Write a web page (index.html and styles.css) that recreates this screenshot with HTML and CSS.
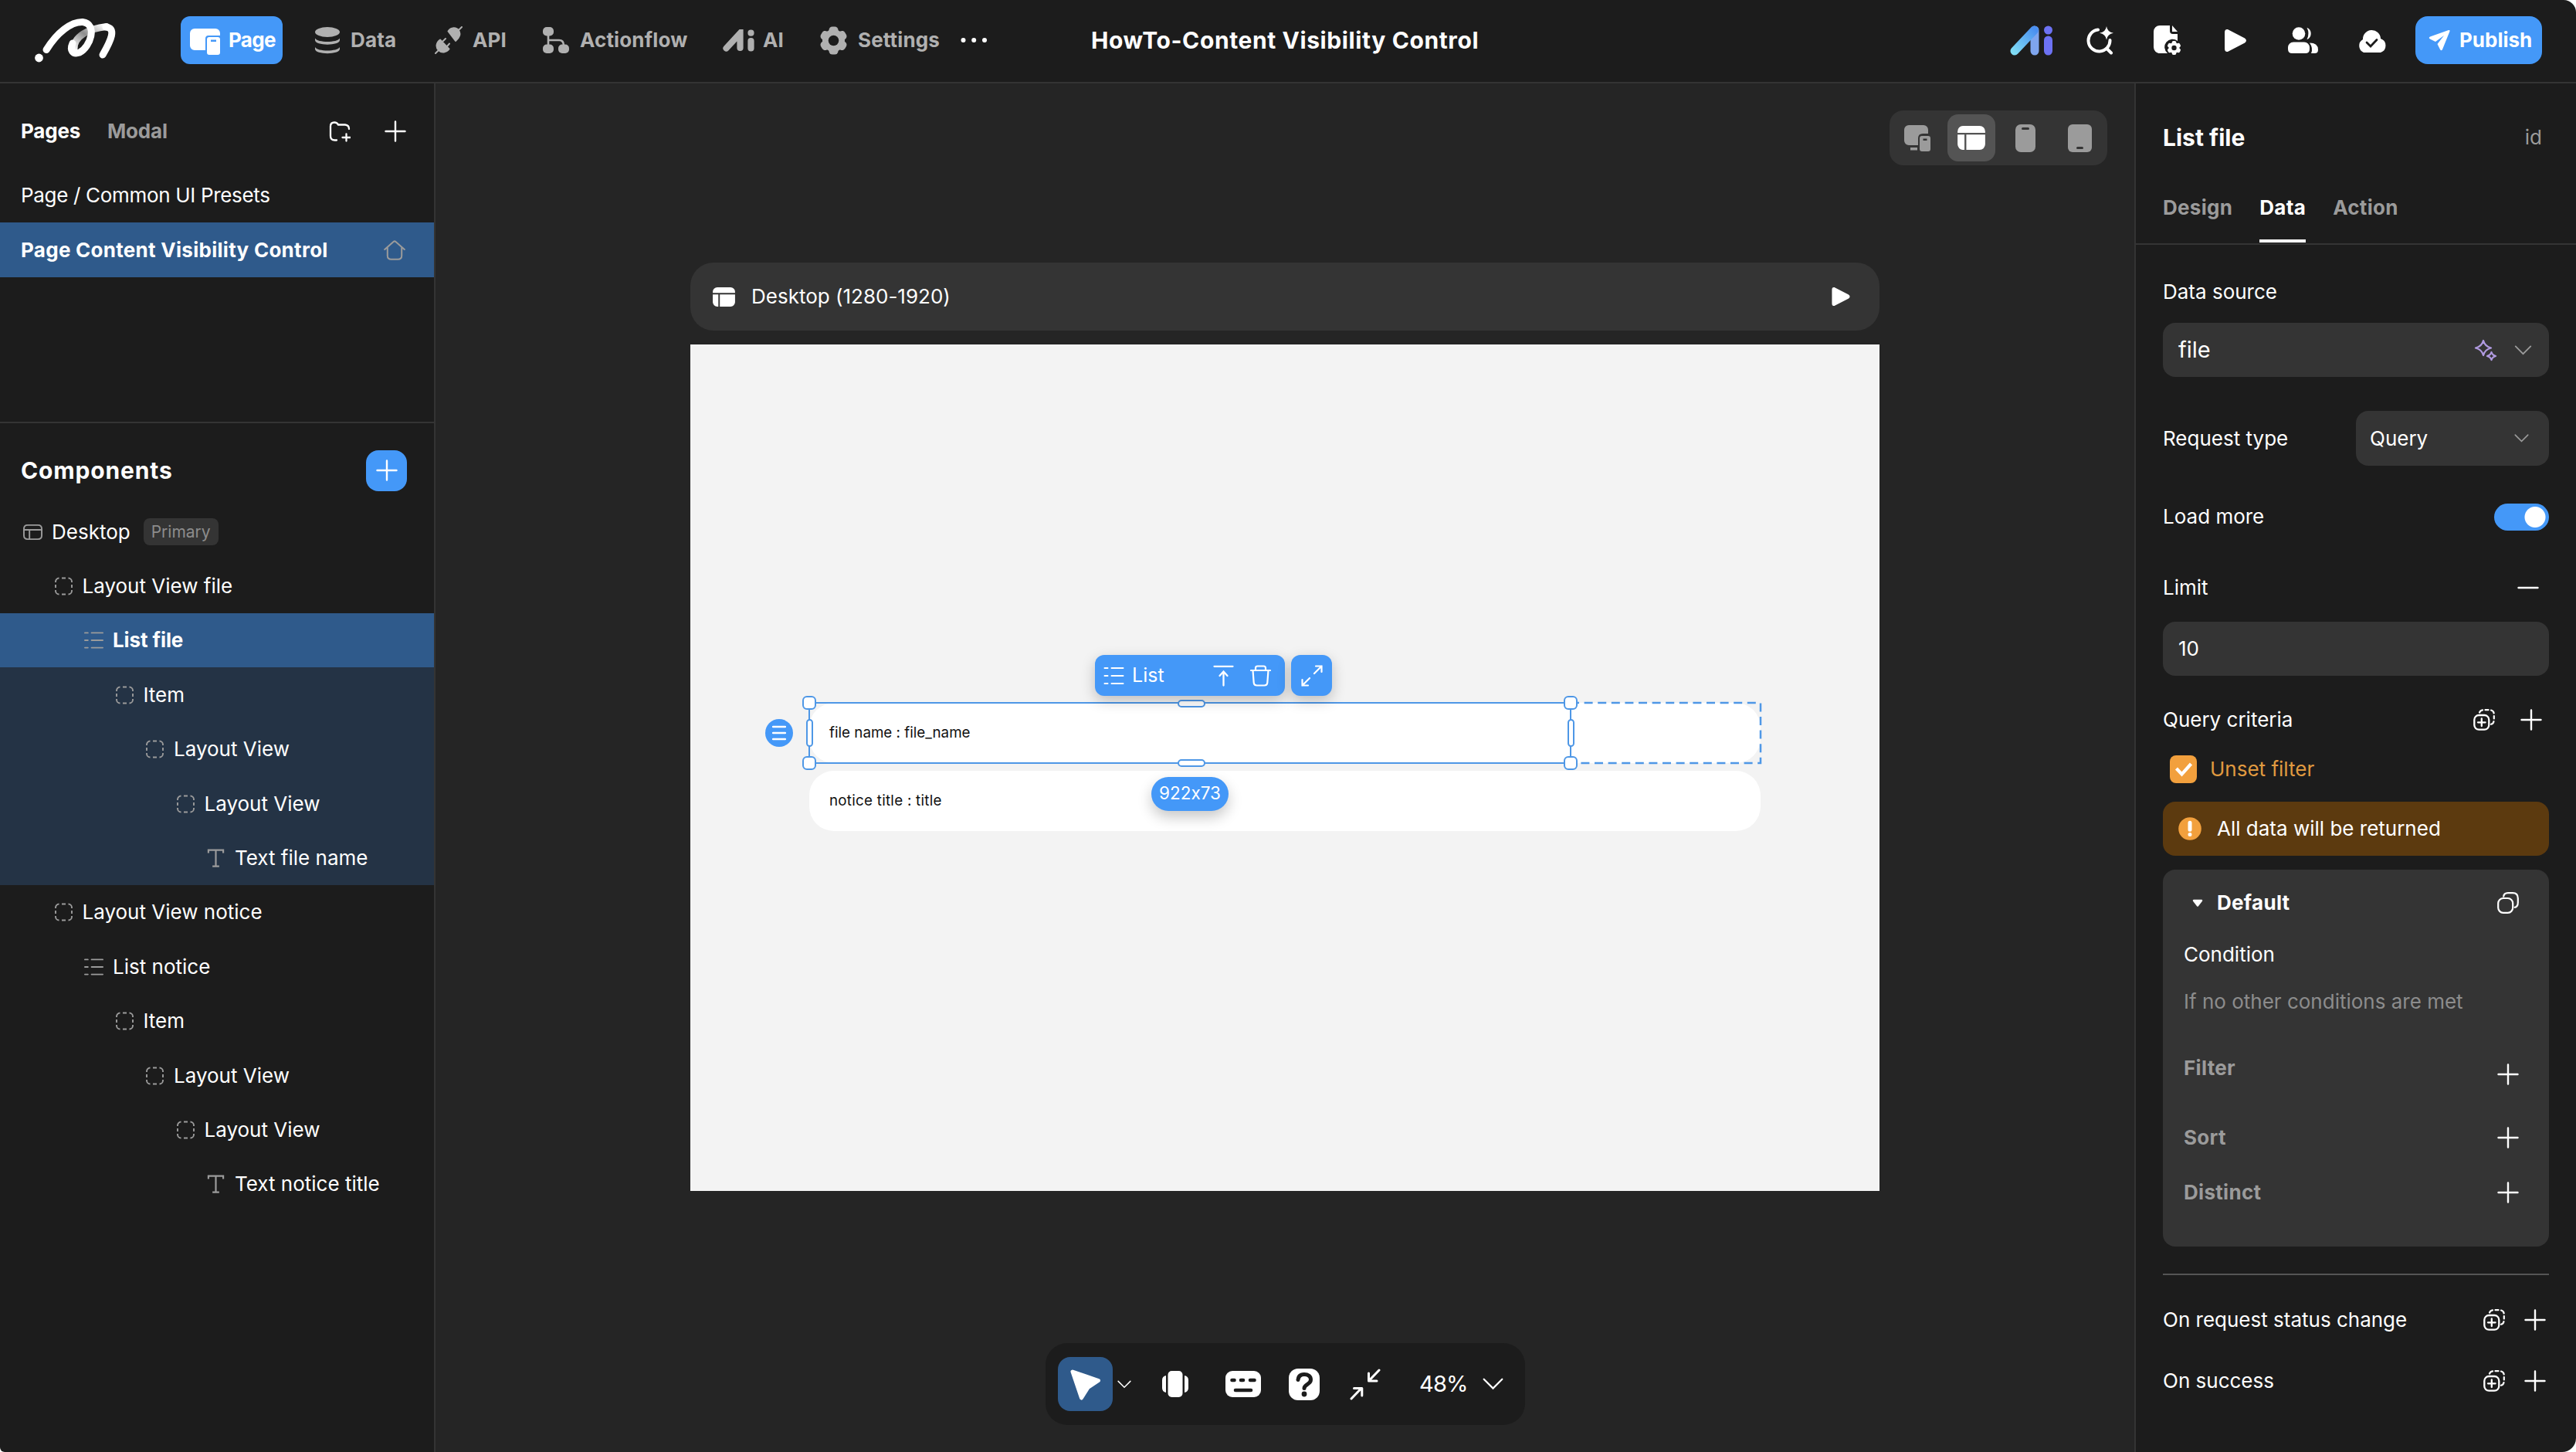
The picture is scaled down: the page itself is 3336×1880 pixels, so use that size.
FILE: index.html
```html
<!DOCTYPE html>
<html>
    <head>
        <title>HowTo-Content Visibility Control</title>
        <meta charset="utf-8">
        <meta name="viewport" content="width=device-width, initial-scale=1">
        <link rel="stylesheet" href="styles.css">
    </head>

    <body>
        <!-- shared icons -->
        <svg class="sprite">
            <symbol id="plus" viewBox="0 0 28 28"><path d="M14 1.5v25M1.5 14h25" fill="none" stroke="currentColor" stroke-width="2.4" stroke-linecap="round"/></symbol>
            <symbol id="view" viewBox="0 0 24 24"><path d="M1.5 7V6a4.500 4.500 0 0 1 4.500-4.500M18 1.500A4.500 4.500 0 0 1 22.500 6v1M22.500 17v1a4.500 4.500 0 0 1-4.500 4.500M6 22.500A4.500 4.500 0 0 1 1.500 18v-1M9.500 1.500h5M9.500 22.500h5M1.500 10v4M22.500 10v4" fill="none" stroke="currentColor" stroke-width="1.900"/></symbol>
            <symbol id="list" viewBox="0 0 26 24"><path d="M1 2h4M10 2h15M1 12h4M10 12h15M1 22h4M10 22h15" fill="none" stroke="currentColor" stroke-width="2" stroke-linecap="round"/></symbol>
            <symbol id="type" viewBox="0 0 20 22"><path d="M1.200 5V1.500h17.600V5M10 1.500v19M6 20.800h8" fill="none" stroke="currentColor" stroke-width="2"/></symbol>
            <symbol id="chevron" viewBox="0 0 24 14"><path d="M1.500 1.500 12 12 22.500 1.500" fill="none" stroke="currentColor" stroke-width="2" stroke-linecap="round"/></symbol>
            <symbol id="copyplus" viewBox="0 0 28 28">
                <rect x="1.300" y="8" width="19" height="18.700" rx="6" fill="none" stroke="currentColor" stroke-width="2.300"/>
                <path d="M10.800 12.500v9.600M6 17.300h9.600" stroke="currentColor" stroke-width="2.300" stroke-linecap="round"/>
                <path d="M8 4.500A5 5 0 0 1 12 1.300M15.500 1.200h4M23 1.500a5 5 0 0 1 3.700 4M26.800 9v3.500M26.500 16a5 5 0 0 1-3.500 3.800" fill="none" stroke="currentColor" stroke-width="2.200" stroke-linecap="round"/>
            </symbol>
            <symbol id="layout" viewBox="0 0 30 26"><path d="M0 7.500V6a6 6 0 0 1 6-6h18a6 6 0 0 1 6 6v1.500zM0 9.500h7.500V26H6a6 6 0 0 1-6-6zM9.500 9.500H30V20a6 6 0 0 1-6 6H9.500z" fill="currentColor"/></symbol>
            <symbol id="play" viewBox="0 0 28 30"><path d="M4 2.500 25 13.500q2 1.500 0 3L4 27.500q-2 .5-2-2v-21q0-2.500 2-2z" fill="currentColor" stroke="currentColor" stroke-width="3" stroke-linejoin="round"/></symbol>
        </svg>

        <header class="topbar">
            <div class="topbar-left">
                <svg class="logo" viewBox="44 22 108 60">
                    <defs><linearGradient id="ribbon" x1="0" y1="1" x2="1" y2="0"><stop offset="0" stop-color="#fff"/><stop offset=".5" stop-color="#8d8d8d"/><stop offset="1" stop-color="#fff"/></linearGradient></defs>
                    <g fill="none" stroke-width="9" stroke-linecap="round">
                        <path d="M96 64C95 47 115 37 138 34.500" stroke="url(#ribbon)"/>
                        <path d="M60 64.500C74 42 92 28 107 28.500C127 31 117 61 103 68C94 71 90 65 94 56" stroke="#fff"/>
                        <path d="M137 35C151 36 144 52 133 71" stroke="#fff"/>
                    </g>
                    <circle cx="50.500" cy="75" r="5.400" fill="#fff"/>
                </svg>
                <nav class="nav">
                    <a class="nav-item nav-active">
                        <svg width="39" height="34" viewBox="0 0 39 34"><path d="M6 0h27a6 6 0 0 1 6 6v3H24a4 4 0 0 0-4 4v15H6a6 6 0 0 1-6-6V6a6 6 0 0 1 6-6z" fill="#fff"/><path d="M25 11h11a3 3 0 0 1 3 3v17a3 3 0 0 1-3 3H25a3 3 0 0 1-3-3V14a3 3 0 0 1 3-3zm2 3.500v2.500h7v-2.500z" fill="#fff"/></svg>
                        <span>Page</span>
                    </a>
                    <a class="nav-item">
                        <svg width="34" height="36" viewBox="0 0 34 36" fill="currentColor"><ellipse cx="17" cy="7.500" rx="16" ry="6.500"/><path d="M1 15.500c3 6 29 6 32 0v2.500c0 7.500-32 7.500-32 0zM1 27c3 6 29 6 32 0v2.500c0 7.500-32 7.500-32 0z"/></svg>
                        <span>Data</span>
                    </a>
                    <a class="nav-item">
                        <svg width="36" height="36" viewBox="0 0 36 36" fill="currentColor" stroke="currentColor" stroke-linecap="round"><path d="M17.500 6.500C21 1 28 1 31 5.500c3 4 1 9.500-4 13.500zM18.500 29.500C15 34 9 35 5 31c-4-4-3-10 2-13.500zM31 5l4-4M5 31l-4 4M10 20l4-4M16 26l3-3.500" stroke-width="2" stroke-linejoin="round"/></svg>
                        <span>API</span>
                    </a>
                    <a class="nav-item">
                        <svg width="35" height="36" viewBox="0 0 35 36" fill="currentColor"><rect x="0" y="1" width="14" height="11.500" rx="5"/><rect x="0" y="23.500" width="14" height="11.500" rx="5"/><rect x="20" y="23.500" width="14" height="11.500" rx="5"/><path d="M7 10v15M7 18h14q6 0 6 7" fill="none" stroke="currentColor" stroke-width="2.600"/></svg>
                        <span>Actionflow</span>
                    </a>
                    <a class="nav-item nav-ai">
                        <svg width="41" height="29" viewBox="0 0 41 29" fill="none" stroke="currentColor" stroke-width="8.200" stroke-linecap="round"><path d="M4.500 24.500 22.500 5v19M36.500 15v9.500M36.500 4.600v.1"/></svg>
                        <span>AI</span>
                    </a>
                    <a class="nav-item">
                        <svg width="37" height="37" viewBox="0 0 37 37"><g fill="currentColor"><circle cx="18.500" cy="18.500" r="14.500"/><rect x="12.500" y=".5" width="12" height="36" rx="4.500"/><rect x="12.500" y=".5" width="12" height="36" rx="4.500" transform="rotate(60 18.500 18.500)"/><rect x="12.500" y=".5" width="12" height="36" rx="4.500" transform="rotate(120 18.500 18.500)"/></g><circle cx="18.500" cy="18.500" r="6.800" fill="#1c1c1c"/></svg>
                        <span>Settings</span>
                    </a>
                    <a class="nav-item"><svg width="35" height="8" viewBox="0 0 35 8" fill="#fff"><circle cx="3.500" cy="4" r="3"/><circle cx="17.200" cy="4" r="3"/><circle cx="31" cy="4" r="3"/></svg></a>
                </nav>
            </div>
            <h1 class="title">HowTo-Content Visibility Control</h1>
            <div class="topbar-right">
                <div class="tools">
                    <span><svg width="56" height="39" viewBox="0 0 56 39" fill="none" stroke-width="11" stroke-linecap="round"><defs><linearGradient id="aiblue" gradientUnits="userSpaceOnUse" x1="4" y1="34" x2="32" y2="5"><stop offset="0" stop-color="#7fdcf5"/><stop offset="1" stop-color="#4a8ff0"/></linearGradient></defs><path d="M32 6v27" stroke="#7fa5ee"/><path d="M6 33 31.500 6" stroke="url(#aiblue)"/><path d="M49.500 19v14M49.500 5.900v.1" stroke="#6d72f3"/></svg></span>
                    <span><svg width="36" height="37" viewBox="0 0 36 37"><path d="M16 4.500A14 14 0 1 0 31.500 18M27 28.500l6 6" fill="none" stroke="#fff" stroke-width="4" stroke-linecap="round"/><path d="M27 0q1 7.500 9 8.800-8 1.500-9 8.800-1-7.300-9-8.800 8-1.300 9-8.800z" fill="#fff"/></svg></span>
                    <span><svg width="36" height="39" viewBox="0 0 36 39"><path d="M8 0h13v7q0 4 4 4h6v9a10 10 0 0 0-13 16H8a8 8 0 0 1-8-8V8a8 8 0 0 1 8-8zM24 0l7 8h-7z" fill="#fff"/><g fill="#fff"><circle cx="26.500" cy="29" r="7"/><rect x="23.700" y="20" width="5.600" height="18" rx="2"/><rect x="23.700" y="20" width="5.600" height="18" rx="2" transform="rotate(60 26.500 29)"/><rect x="23.700" y="20" width="5.600" height="18" rx="2" transform="rotate(120 26.500 29)"/></g><circle cx="26.500" cy="29" r="3.200" fill="#1c1c1c"/></svg></span>
                    <span><svg width="30" height="31"><use href="#play"/></svg></span>
                    <span><svg width="40" height="35" viewBox="0 0 40 35" fill="#fff"><circle cx="14" cy="8.500" r="8.300"/><path d="M24.500.8a8.300 8.300 0 0 1 0 15.400q4-7.700 0-15.400zM7 19.500h14a7 7 0 0 1 7 7v2q0 5.500-5.500 5.500h-17Q0 34 0 28.500v-2a7 7 0 0 1 7-7zM28 20.500q11 0 11 9 0 4.500-4.500 4.500H30q3-6.500-2-13.500z"/></svg></span>
                    <span><svg width="41" height="31" viewBox="0 0 41 31"><path d="M9 14a11.500 11.500 0 0 1 23-1 9.500 9.500 0 0 1 0 18H10A9.500 9.500 0 0 1 9 14z" fill="#fff"/><path d="m14 18 5 5 8-8.500" fill="none" stroke="#1c1c1c" stroke-width="2.800" stroke-linecap="round"/></svg></span>
                </div>
                <button class="publish">
                    <svg width="28" height="28" viewBox="0 0 28 28"><path d="M26 1 2 9.500q-2.500 1.500 0 3L9 16 20 8l-8.500 11 3.500 7q1.500 2.500 3 0L27.500 2.500Q28 .5 26 1z" fill="#fff"/></svg>
                    <span>Publish</span>
                </button>
            </div>
        </header>

        <main class="workspace">
            <aside class="left">
                <div class="pages-head">
                    <span class="white">Pages</span>
                    <span>Modal</span>
                    <svg class="folder" width="28" height="27" viewBox="0 0 28 27"><path d="M10 24.500H7.500Q2 24.500 2 19V6.500Q2 1.500 7 1.500q3.500 0 5 3h9Q26 5 26 10" fill="none" stroke="#fff" stroke-width="2.300" stroke-linecap="round"/><path d="M22.500 16.500v9M17.500 21h10" stroke="#fff" stroke-width="2.300" stroke-linecap="round"/></svg>
                    <svg class="white" width="28" height="28"><use href="#plus"/></svg>
                </div>
                <div class="page-row">Page / Common UI Presets</div>
                <div class="page-row page-selected">
                    <span>Page Content Visibility Control</span>
                    <svg width="28" height="26" viewBox="0 0 28 26"><path d="M1.200 12 12.500 2q1.500-1.200 3 0L26.800 12M4.800 9.500V20q0 4.800 4.800 4.800h8.800q4.800 0 4.800-4.800V9.500" fill="none" stroke="#9b9b9b" stroke-width="2" stroke-linecap="round"/></svg>
                </div>

                <div class="components-head">
                    <h2>Components</h2>
                    <button class="add"><svg width="28" height="28"><use href="#plus"/></svg></button>
                </div>
                <ul class="tree">
                    <li class="l0"><svg viewBox="0 0 26 24"><path d="M6 2.500h14q5 0 5 5v9q0 5-5 5H6q-5 0-5-5v-9q0-5 5-5zM1 8.800h24M8.500 9v12.500" fill="none" stroke="currentColor" stroke-width="2"/></svg>Desktop<em class="badge">Primary</em></li>
                    <li class="l1"><svg><use href="#view"/></svg>Layout View file</li>
                    <li class="l2 selected"><svg><use href="#list"/></svg>List file</li>
                    <li class="l3 child"><svg><use href="#view"/></svg>Item</li>
                    <li class="l4 child"><svg><use href="#view"/></svg>Layout View</li>
                    <li class="l5 child"><svg><use href="#view"/></svg>Layout View</li>
                    <li class="l6 child"><svg><use href="#type"/></svg>Text file name</li>
                    <li class="l1"><svg><use href="#view"/></svg>Layout View notice</li>
                    <li class="l2"><svg><use href="#list"/></svg>List notice</li>
                    <li class="l3"><svg><use href="#view"/></svg>Item</li>
                    <li class="l4"><svg><use href="#view"/></svg>Layout View</li>
                    <li class="l5"><svg><use href="#view"/></svg>Layout View</li>
                    <li class="l6"><svg><use href="#type"/></svg>Text notice title</li>
                </ul>
            </aside>

            <section class="canvas">
                <div class="devices">
                    <span><svg width="34" height="36" viewBox="0 0 34 36" fill="currentColor"><path d="M6 1h19a6 6 0 0 1 6 6v5h-7q-6 0-6 6v9H6a6 6 0 0 1-6-6V7a6 6 0 0 1 6-6zM8 30h9v3.500H8z"/><path d="M23 15h8a3 3 0 0 1 3 3v14a3 3 0 0 1-3 3h-8a3 3 0 0 1-3-3V18a3 3 0 0 1 3-3zm1.500 3.500v2.500h5v-2.500z"/></svg></span>
                    <span class="device-on"><svg width="36" height="31"><use href="#layout"/></svg></span>
                    <span><svg width="26" height="36" viewBox="0 0 26 36"><rect width="26" height="36" rx="7" fill="currentColor"/><rect x="8" y="4" width="10" height="3" rx="1.500" fill="#343434"/></svg></span>
                    <span><svg width="31" height="36" viewBox="0 0 31 36"><rect width="31" height="36" rx="6" fill="currentColor"/><rect x="11" y="29" width="9" height="3" rx="1.500" fill="#343434"/></svg></span>
                </div>

                <div class="frame">
                    <div class="frame-head">
                        <svg width="29" height="25"><use href="#layout"/></svg>
                        <span>Desktop (1280-1920)</span>
                        <svg class="frame-play" width="24" height="26"><use href="#play"/></svg>
                    </div>
                    <div class="artboard">
                        <div class="item">
                            file name : file_name
                            <div class="ghost"><svg width="1236" height="82" viewBox="0 0 1236 82"><path d="M988 2h246v78H988" fill="none" stroke="#4e97e6" stroke-width="2.500" stroke-dasharray="11 6.600"/></svg></div>
                            <div class="selection">
                                <i class="corner tl"></i><i class="corner tr"></i><i class="corner bl"></i><i class="corner br"></i>
                                <i class="bar bt"></i><i class="bar bb"></i><i class="side sl"></i><i class="side sr"></i>
                                <div class="drag"><svg width="18" height="20" viewBox="0 0 18 20"><path d="M1 2h16M1 10h16M1 18h16" stroke="#fff" stroke-width="2.400" stroke-linecap="round"/></svg></div>
                                <div class="floating">
                                    <div class="float-main">
                                        <svg width="27" height="24"><use href="#list"/></svg>
                                        <span>List</span>
                                        <svg class="up" width="27" height="28" viewBox="0 0 27 28"><path d="M1.500 1.800h24M13.500 26.500V9M8.500 14l5-5.500 5 5.500" fill="none" stroke="#fff" stroke-width="2.300" stroke-linecap="round"/></svg>
                                        <svg width="27" height="28" viewBox="0 0 27 28"><path d="M1 7h25M7 7V4q0-2.500 2.500-2.500h8Q20 1.500 20 4v3M3.500 7l1.200 16q.3 3.500 4 3.500h9.600q3.700 0 4-3.500L23.500 7" fill="none" stroke="#fff" stroke-width="2.200" stroke-linecap="round"/></svg>
                                    </div>
                                    <div class="float-expand"><svg width="28" height="28" viewBox="0 0 28 28"><path d="M17 11 26.500 1.500M19 1.500h7.500V9M11 17l-9.500 9.500M9 26.500H1.500V19" fill="none" stroke="#fff" stroke-width="2.200" stroke-linecap="round"/></svg></div>
                                </div>
                                <div class="size">922x73</div>
                            </div>
                        </div>
                        <div class="item notice">notice title : title</div>
                    </div>
                </div>

                <div class="dock">
                    <span class="dock-on"><svg width="41" height="41" viewBox="0 0 41 41"><path d="M4 4 37.500 15.500 24 24.500 15.500 38Z" fill="#fff" stroke="#fff" stroke-width="5" stroke-linejoin="round"/></svg></span>
                    <svg class="dock-more" width="18" height="11"><use href="#chevron"/></svg>
                    <svg class="dock-pages" width="34" height="34" viewBox="0 0 34 34" fill="#fff"><rect x="7.500" width="19" height="34" rx="5"/><path d="M5 6v22Q0 27 0 22V12q0-5 5-6zM29 6v22q5-1 5-6V12q0-5-5-6z"/></svg>
                    <svg class="dock-keys" width="46" height="34" viewBox="0 0 46 34"><rect width="46" height="34" rx="9" fill="#fff"/><path d="M8.500 12h3M20 12h3M32 12h5.500M13 25h20" stroke="#1c1c1c" stroke-width="4.600" stroke-linecap="round"/></svg>
                    <svg class="dock-help" width="40" height="41" viewBox="0 0 40 41"><rect width="40" height="41" rx="12" fill="#fff"/><path d="M12 14.500C12.500 9.500 16 7.500 20 7.500c5 0 8.500 2.500 8.500 7 0 6-8.500 5.500-8.500 11" fill="none" stroke="#1c1c1c" stroke-width="5" stroke-linecap="round"/><circle cx="20" cy="33" r="3.400" fill="#1c1c1c"/></svg>
                    <svg class="dock-fit" width="40" height="41" viewBox="0 0 40 41"><path d="M38 2 25 15.500M24.500 6v10H35M2 39 15 25.500M5.500 25.500h10.300V35" fill="none" stroke="#fff" stroke-width="3" stroke-linecap="round" stroke-linejoin="round"/></svg>
                    <span class="zoom">48%</span>
                    <svg width="27" height="16"><use href="#chevron"/></svg>
                </div>
            </section>

            <aside class="right">
                <div class="right-head"><h2>List file</h2><span>id</span></div>
                <div class="tabs"><span>Design</span><span class="tab-on">Data</span><span>Action</span></div>

                <div class="settings">
                    <div class="row source">Data source</div>
                    <div class="field field-file">
                        <span>file</span>
                        <svg class="spark" width="30" height="29" viewBox="0 0 30 29"><path d="M12 2q2 7.500 10 9.500-8 2-10 9.500-2-7.500-10-9.500Q10 9.500 12 2zM22.500 17q1.200 3.800 5.500 5-4.300 1.200-5.500 5-1.200-3.800-5.500-5 4.300-1.200 5.500-5z" fill="none" stroke="#b09ae0" stroke-width="2.300" stroke-linejoin="round"/></svg>
                        <svg class="arrow" width="23" height="13"><use href="#chevron"/></svg>
                    </div>
                    <div class="row request">
                        Request type
                        <div class="field field-query"><span>Query</span><svg class="arrow" width="19" height="11"><use href="#chevron"/></svg></div>
                    </div>
                    <div class="row load">Load more<div class="toggle"></div></div>
                    <div class="row limit">Limit<svg width="28" height="4" viewBox="0 0 28 4"><path d="M1.500 2h25" stroke="#fff" stroke-width="2.400" stroke-linecap="round"/></svg></div>
                    <div class="field field-limit">10</div>
                    <div class="row criteria">Query criteria<div class="actions"><svg width="28" height="28"><use href="#copyplus"/></svg><svg width="28" height="28"><use href="#plus"/></svg></div></div>
                    <div class="row unset"><i class="check"><svg width="24" height="20" viewBox="0 0 24 20"><path d="m2.500 9 7 7.500L21.500 3" fill="none" stroke="#fff" stroke-width="4.200"/></svg></i>Unset filter</div>
                    <div class="warning"><svg width="30" height="30" viewBox="0 0 30 30"><circle cx="15" cy="15" r="14.800" fill="#f2a03d"/><path d="M15 7.200v9M15 22.500v.1" stroke="#fff" stroke-width="5" stroke-linecap="round"/></svg>All data will be returned</div>

                    <div class="card">
                        <div class="row default"><svg width="14" height="11" viewBox="0 0 14 11"><path d="M2 2h10L7 8.500z" fill="#fff" stroke="#fff" stroke-width="2.500" stroke-linejoin="round"/></svg><b>Default</b>
                            <svg class="copy" width="28" height="28" viewBox="0 0 28 28" fill="none" stroke="#fff" stroke-width="2.200"><rect x="1.200" y="8" width="19" height="18.800" rx="6.500"/><path d="M8 6.500Q8.500 1.200 14 1.200h6q6.800 0 6.800 6.800v5.500q0 6-5 6.500"/></svg></div>
                        <div class="row condition">Condition</div>
                        <div class="row hint">If no other conditions are met</div>
                        <div class="row filter"><b>Filter</b><svg width="28" height="28"><use href="#plus"/></svg></div>
                        <div class="row sort"><b>Sort</b><svg width="28" height="28"><use href="#plus"/></svg></div>
                        <div class="row distinct"><b>Distinct</b><svg width="28" height="28"><use href="#plus"/></svg></div>
                    </div>

                    <hr>
                    <div class="row event">On request status change<div class="actions"><svg width="28" height="28"><use href="#copyplus"/></svg><svg width="28" height="28"><use href="#plus"/></svg></div></div>
                    <div class="row event">On success<div class="actions"><svg width="28" height="28"><use href="#copyplus"/></svg><svg width="28" height="28"><use href="#plus"/></svg></div></div>
                </div>
            </aside>
        </main>
    </body>
</html>
```
FILE: styles.css
```css
* {
    box-sizing: border-box;
}
html {
    background: #fff;
}
body {
    margin: 0;
    height: 1880px;
    display: flex;
    flex-direction: column;
    overflow: hidden;
    border-radius: 0 16px 18px 6px;
    background: #1c1c1c;
    color: #fff;
    font-family: Inter, "Open Sans", sans-serif;
    font-size: 26px;
    line-height: 40px;
    font-feature-settings: "calt" 0;
}
h1, h2, ul {
    margin: 0;
    padding: 0;
}
svg {
    flex: none;
    display: block;
}
button {
    border: none;
    padding: 0;
    color: #fff;
    font: inherit;
    background: #4498f8;
}
.sprite {
    position: absolute;
    width: 0;
    height: 0;
}
.white {
    color: #fff;
}

/* top bar */
.topbar {
    display: grid;
    grid-template-columns: 1413px 504px 1fr;
    align-items: center;
    flex: none;
    height: 108px;
    padding-bottom: 2px;
    border-bottom: 2px solid #343434;
}
.topbar-left {
    display: flex;
    align-items: center;
}
.logo {
    width: 108px;
    height: 60px;
    margin-left: 44px;
}
.nav {
    display: grid;
    grid-template-columns: 173px 156px 140px 233px 125px 183px auto;
    align-items: center;
    margin-left: 82px;
}
.nav-item {
    display: flex;
    align-items: center;
    gap: 13px;
    height: 62px;
    color: #b0b0b0;
    font-weight: 700;
    letter-spacing: 0.15px;
}
.nav-ai {
    gap: 11px;
}
.nav-active {
    width: 132px;
    gap: 11px;
    padding-left: 12px;
    border-radius: 12px;
    background: #4498f8;
    color: #fff;
    letter-spacing: -0.7px;
}
.nav-active svg {
    margin-top: 4px;
}
.title {
    font-size: 30px;
    font-weight: 700;
    letter-spacing: 0.6px;
    white-space: nowrap;
}
.topbar-right {
    display: flex;
    justify-content: flex-end;
    padding-right: 44px;
}
.tools {
    display: flex;
    margin-right: 13px;
}
.tools span {
    display: flex;
    align-items: center;
    justify-content: center;
    width: 88px;
}
.publish {
    display: flex;
    align-items: center;
    gap: 12px;
    width: 164px;
    height: 62px;
    padding-left: 17px;
    border-radius: 16px;
    font-weight: 700;
}

.workspace {
    display: flex;
    flex: 1;
    min-height: 0;
}

/* left panel */
.left {
    flex: none;
    width: 564px;
    border-right: 2px solid #343434;
}
.pages-head {
    display: flex;
    align-items: center;
    height: 109px;
    padding: 15px 36px 0 27px;
    gap: 35px;
    color: #9b9b9b;
    font-weight: 700;
    letter-spacing: -0.2px;
}
.folder {
    margin-left: auto;
    margin-right: 9px;
}
.page-row {
    display: flex;
    align-items: center;
    justify-content: space-between;
    height: 71px;
    padding: 0 37px 0 27px;
    letter-spacing: -0.32px;
}
.page-selected {
    background: #2f5a8b;
    font-weight: 700;
    letter-spacing: 0.28px;
}
.components-head {
    display: flex;
    align-items: center;
    justify-content: space-between;
    height: 107px;
    margin-top: 187px;
    padding: 17px 35px 0 27px;
    border-top: 2px solid #343434;
}
.components-head h2 {
    font-size: 30px;
    font-weight: 700;
    letter-spacing: 0.85px;
}
.add {
    display: flex;
    align-items: center;
    justify-content: center;
    width: 53px;
    height: 53px;
    border-radius: 16px;
}
.tree {
    list-style: none;
}
.tree li {
    display: flex;
    align-items: center;
    height: 70.4px;
    padding-top: 1px;
}
.tree svg {
    width: 25px;
    height: 24px;
    margin-right: 12px;
    color: #9b9b9b;
}
.l0 { padding-left: 30px; }
.l1 { padding-left: 69.5px; }
.l2 { padding-left: 109px; }
.l3 { padding-left: 148.5px; }
.l4 { padding-left: 188px; }
.l5 { padding-left: 227.5px; }
.l6 { padding-left: 267px; }
.selected {
    background: #2f5a8b;
    font-weight: 700;
    letter-spacing: -0.1px;
}
.child {
    background: #243345;
}
.badge {
    margin-left: 17px;
    padding: 0 10px;
    border-radius: 8px;
    background: #343434;
    color: #8c8c8c;
    font-size: 21px;
    font-style: normal;
    line-height: 35px;
}

/* canvas */
.canvas {
    position: relative;
    flex: 1;
    background: #252525;
}
.devices {
    position: absolute;
    top: 35px;
    right: 35px;
    display: flex;
    gap: 8px;
    padding: 5px 5px;
    border-radius: 18px;
    background: #343434;
    color: #9b9b9b;
}
.devices span {
    display: flex;
    align-items: center;
    justify-content: center;
    width: 62px;
    height: 61px;
}
.devices .device-on {
    border-radius: 14px;
    background: #545454;
    color: #fff;
}
.frame {
    width: 1540px;
    margin: 232px 0 0 330px;
}
.frame-head {
    display: flex;
    align-items: center;
    height: 88px;
    padding: 0 38px 0 29px;
    gap: 21px;
    border-radius: 30px;
    background: #343434;
}
.frame-play {
    margin-left: auto;
}
.artboard {
    height: 1096px;
    margin-top: 18px;
    padding: 464px 154px 0;
    background: #f3f3f3;
}
.item {
    position: relative;
    height: 78px;
    margin-bottom: 10px;
    padding-left: 26px;
    border-radius: 32px;
    background: #fff;
    color: #111;
    font-size: 18.8px;
    line-height: 78px;
}
.notice {
    letter-spacing: 0.25px;
}

/* selection overlay */
.ghost {
    position: absolute;
    top: -2px;
    left: -2px;
}
.selection {
    position: absolute;
    z-index: 1;
    top: -1px;
    left: -1px;
    width: 988px;
    height: 80px;
    border: 2px solid #4e97e6;
}
.corner, .bar, .side {
    position: absolute;
    border: 2px solid #4e97e6;
    background: #fff;
}
.corner {
    width: 18px;
    height: 18px;
    border-radius: 6px;
}
.bar {
    left: 476px;
    width: 36px;
    height: 10px;
    border-radius: 5px;
}
.side {
    top: 20px;
    width: 9px;
    height: 36px;
    border-radius: 5px;
}
.tl { top: -10px; left: -10px; }
.tr { top: -10px; right: -10px; }
.bl { bottom: -10px; left: -10px; }
.br { bottom: -10px; right: -10px; }
.bt { top: -5px; }
.bb { bottom: -6px; }
.sl { left: -5px; }
.sr { right: -6px; }
.drag {
    position: absolute;
    top: 20px;
    left: -58px;
    display: flex;
    align-items: center;
    justify-content: center;
    width: 36px;
    height: 36px;
    border-radius: 50%;
    background: #4498f8;
}
.floating {
    position: absolute;
    top: -63px;
    left: 369px;
    display: flex;
    gap: 8px;
    color: #fff;
    font-size: 25px;
    line-height: 53px;
}
.float-main, .float-expand {
    display: flex;
    align-items: center;
    height: 53px;
    border-radius: 12px;
    background: #4498f8;
    box-shadow: 0 6px 18px rgba(0, 0, 0, 0.22);
}
.float-main {
    width: 246px;
    padding: 0 18px 0 11px;
    gap: 10px;
}
.float-main .up {
    margin-left: auto;
    margin-right: 11px;
}
.float-expand {
    justify-content: center;
    width: 53px;
}
.size {
    position: absolute;
    top: 95px;
    left: 442px;
    width: 100px;
    height: 44px;
    border-radius: 22px;
    background: #4498f8;
    box-shadow: 0 8px 18px rgba(0, 0, 0, 0.22);
    color: #fff;
    font-size: 22.500px;
    line-height: 42px;
    text-align: center;
}

/* bottom dock */
.dock {
    position: absolute;
    bottom: 35px;
    left: 790px;
    display: flex;
    align-items: center;
    width: 621px;
    height: 106px;
    padding: 0 28px 0 16px;
    border-radius: 28px;
    background: #1c1c1c;
}
.dock-on {
    display: flex;
    align-items: center;
    justify-content: center;
    width: 71px;
    height: 70px;
    border-radius: 16px;
    background: #2f5a8b;
}
.dock-more { margin-left: 6px; }
.dock-pages { margin-left: 40px; }
.dock-keys { margin-left: 48px; }
.dock-help { margin-left: 36px; }
.dock-fit { margin-left: 39px; }
.zoom {
    margin-left: 50px;
    margin-right: auto;
    font-size: 29px;
    letter-spacing: -0.8px;
}

/* right panel */
.right {
    flex: none;
    width: 572px;
    border-left: 2px solid #343434;
}
.right-head {
    display: flex;
    align-items: center;
    justify-content: space-between;
    height: 140px;
    padding: 0 44px 0 35px;
}
.right-head h2 {
    font-size: 30px;
    font-weight: 700;
}
.right-head span {
    color: #9b9b9b;
}
.tabs {
    display: flex;
    gap: 35px;
    height: 69px;
    padding-left: 35px;
    border-bottom: 2px solid #343434;
    color: #9b9b9b;
    font-weight: 700;
    letter-spacing: 0.3px;
    line-height: 42px;
}
.tabs .tab-on {
    height: 66px;
    border-bottom: 4px solid #fff;
    color: #fff;
}
.settings {
    padding: 0 35px;
}
.row {
    display: flex;
    align-items: center;
    justify-content: space-between;
    height: 40px;
}
.field {
    display: flex;
    align-items: center;
    height: 70px;
    padding: 0 22px 0 20px;
    border-radius: 16px;
    background: #343434;
}
.arrow {
    color: #9b9b9b;
}
.source { margin: 41px 0 20px; }
.field-file { font-size: 29px; }
.spark {
    margin-left: auto;
    margin-right: 22px;
}
.request {
    height: 71px;
    margin-top: 44px;
}
.field-query {
    justify-content: space-between;
    width: 250px;
    height: 71px;
    padding: 0 26px 0 18px;
}
.load {
    height: 36px;
    margin-top: 48px;
}
.toggle {
    width: 71px;
    height: 35px;
    border-radius: 18px;
    background: radial-gradient(circle at 53px 17.500px, #fff 13px, #4498f8 14px);
}
.limit {
    margin: 54px 0 24px;
    padding-right: 13px;
}
.criteria {
    margin-top: 37px;
    padding-right: 9px;
}
.actions {
    display: flex;
    gap: 33px;
}
.unset {
    justify-content: flex-start;
    height: 36px;
    margin-top: 26px;
    padding-left: 9px;
    color: #e09a40;
}
.check {
    display: flex;
    align-items: center;
    justify-content: center;
    width: 35px;
    height: 36px;
    margin-right: 17px;
    border-radius: 8px;
    background: #f2a03d;
}
.warning {
    display: flex;
    align-items: center;
    gap: 20px;
    height: 70px;
    margin-top: 24px;
    padding-left: 20px;
    border-radius: 16px;
    background: #5c3a0f;
}
.card {
    height: 488px;
    margin-top: 18px;
    padding: 23px 39px 0 27px;
    border-radius: 16px;
    background: #343434;
}
.card b {
    font-weight: 700;
    letter-spacing: 0.3px;
    color: #9b9b9b;
}
.default {
    justify-content: flex-start;
    padding-left: 11px;
}
.card .default b {
    margin-left: 18px;
    color: #fff;
}
.copy { margin-left: auto; }
.condition { margin-top: 27px; }
.hint {
    margin-top: 21px;
    color: #8c8c8c;
    white-space: nowrap;
}
.filter { margin-top: 46px; }
.filter svg {
    margin-top: 16px;
}
.sort { margin-top: 50px; }
.distinct { margin-top: 31px; }
hr {
    height: 2px;
    margin: 35px 0 38px;
    border: none;
    background: #555;
}
.event {
    margin-bottom: 39px;
    padding-right: 4px;
}
.event .actions {
    gap: 25px;
}
```
